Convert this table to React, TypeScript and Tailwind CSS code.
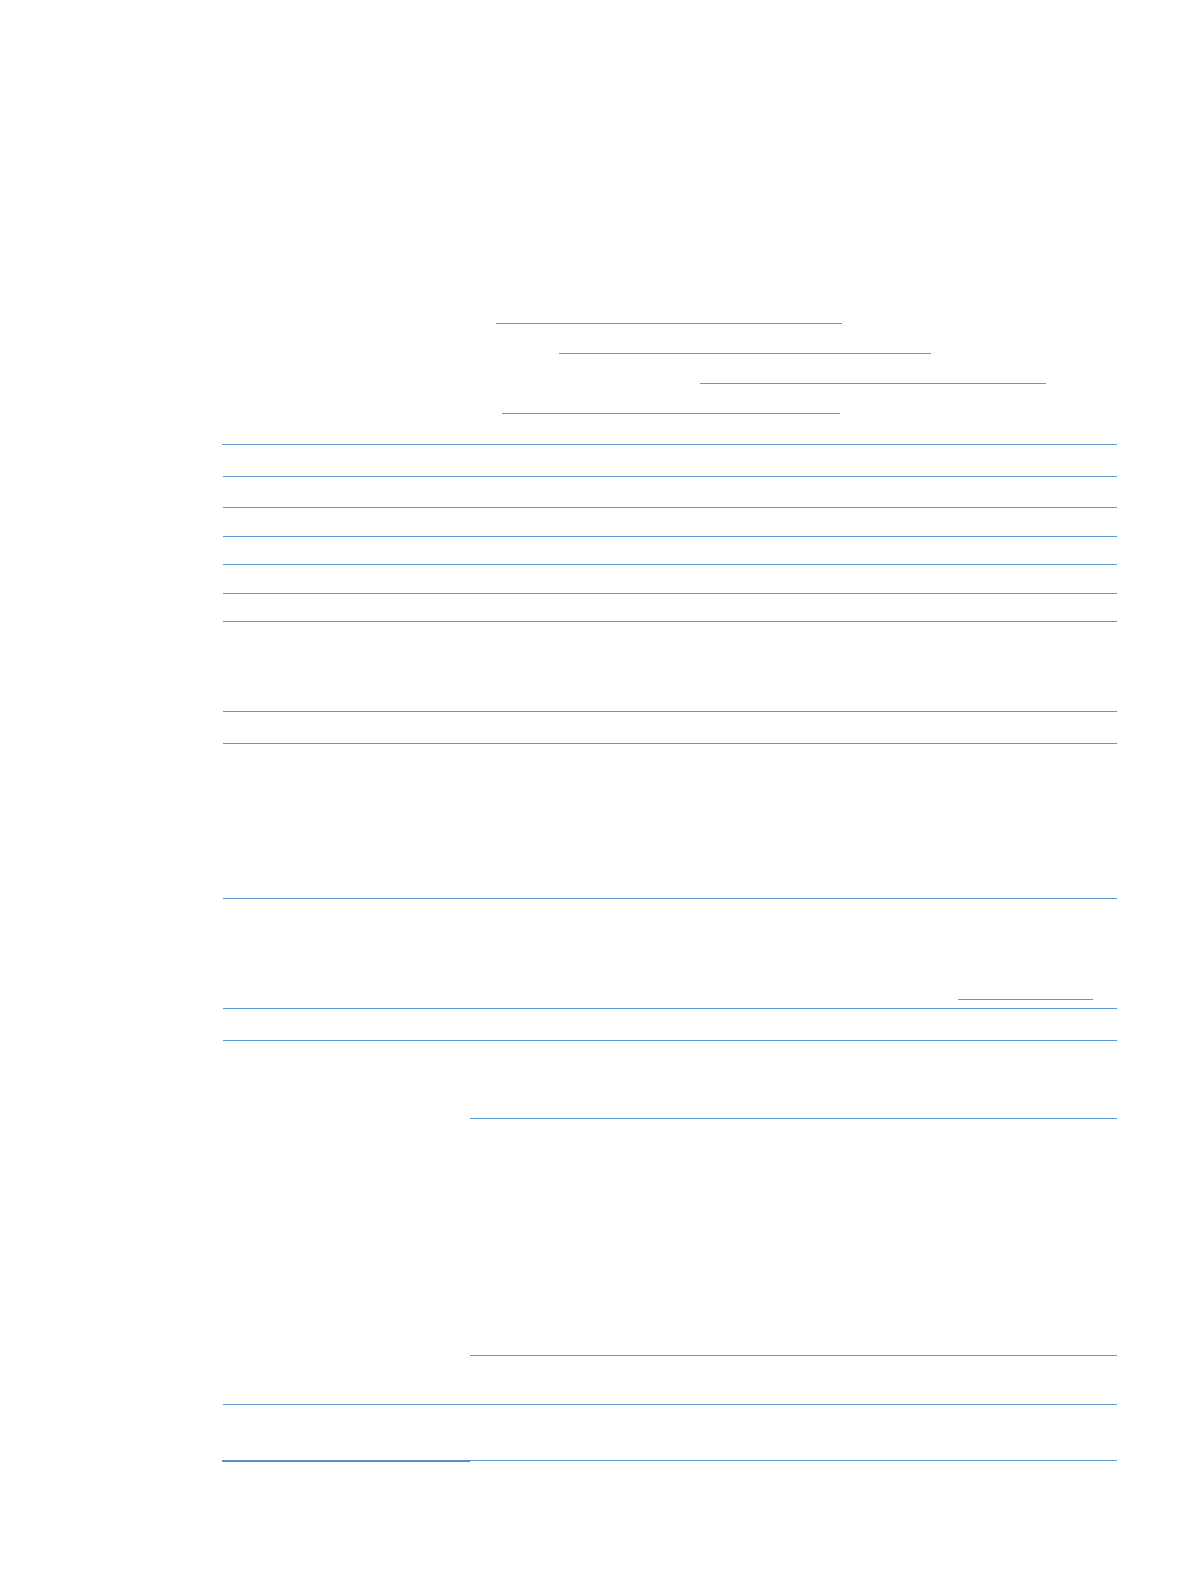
const fieldLines = [
  { indent: 'pl-[273px]', width: 'w-[346px]' },
  { indent: 'pl-[336px]', width: 'w-[372px]' },
  { indent: 'pl-[477px]', width: 'w-[346px]' },
  { indent: 'pl-[279px]', width: 'w-[338px]' },
];

// heights of the plain table rows, border included
const topRows = ['h-[32px]', 'h-[31px]', 'h-[29px]', 'h-[28px]', 'h-[29px]', 'h-[28px]', 'h-[90px]', 'h-[32px]', 'h-[155px]'];

export default function App() {
  return (
    <div className="min-h-[1584px] bg-white pt-[294px] pl-[222px] pr-[73px] font-['Liberation_Sans',sans-serif]">
      <div className="pl-px">
        {/* Header fields */}
        {fieldLines.map((line, i) => (
          <div key={i} className={`h-[30px] flex items-end ${line.indent}`}>
            <div className={`${line.width} border-b border-[#5b9bd5]`}></div>
          </div>
        ))}
      </div>

      {/* Form table */}
      <div className="mt-[30px] pl-px border-t border-[#5b9bd5]">
        {topRows.map((h, i) => (
          <div key={i} className={`${h} border-b border-[#5b9bd5]`}></div>
        ))}

        <div className="h-[110px] border-b border-[#5b9bd5] flex items-end justify-end pr-[24px] pb-[8px]">
          <div className="w-[135px] border-b border-[#5b9bd5]"></div>
        </div>

        <div className="h-[32px] border-b border-[#5b9bd5]"></div>

        <div className="h-[364px] border-b border-[#5b9bd5] flex">
          <div className="w-[247px] shrink-0"></div>
          <div className="flex-1 flex flex-col">
            <div className="h-[78px] border-b border-[#5b9bd5]"></div>
            <div className="h-[237px] border-b border-[#5b9bd5]"></div>
          </div>
        </div>

        <div className="h-[55px]"></div>
      </div>

      {/* Closing rule */}
      <div className="flex items-start">
        <div className="w-[248px] h-[2px] bg-[#5a8fcb]"></div>
        <div className="flex-1 h-px bg-[#5b9bd5]"></div>
      </div>
    </div>
  );
}
